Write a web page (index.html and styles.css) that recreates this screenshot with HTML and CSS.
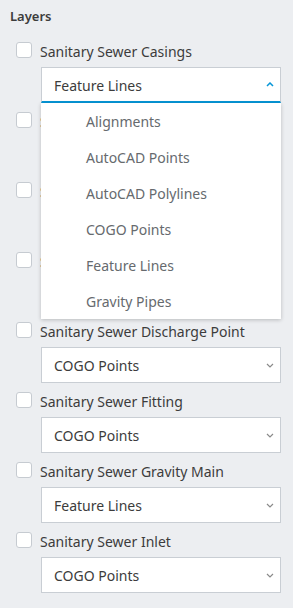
FILE: index.html
```html
<!DOCTYPE html>
<html>
<head>
<meta charset="utf-8">
<link rel="stylesheet" href="styles.css">
</head>
<body>
<div class="panel">
  <h2 class="title">Layers</h2>
  <div class="rows">
    <div class="row">
      <label class="check"><span class="box"></span><span class="label">Sanitary Sewer Casings</span></label>
      <div class="select open">
        <span class="value">Feature Lines</span>
        <svg class="chev" width="8" height="5" viewBox="0 0 8 5"><path d="M1 4 L4 1 L7 4" fill="none" stroke="#0696d7" stroke-width="1.5"/></svg>
        <ul class="menu">
          <li>Alignments</li>
          <li>AutoCAD Points</li>
          <li>AutoCAD Polylines</li>
          <li>COGO Points</li>
          <li>Feature Lines</li>
          <li>Gravity Pipes</li>
        </ul>
      </div>
    </div>
    <div class="row">
      <label class="check"><span class="box"></span><span class="label">Sanitary Sewer Cleanout</span></label>
      <div class="select"><span class="value">COGO Points</span><svg class="chev" width="8" height="5" viewBox="0 0 8 5"><path d="M1 1 L4 4 L7 1" fill="none" stroke="#8a8a8a" stroke-width="1.2"/></svg></div>
    </div>
    <div class="row">
      <label class="check"><span class="box"></span><span class="label">Sanitary Sewer Connection</span></label>
      <div class="select"><span class="value">COGO Points</span><svg class="chev" width="8" height="5" viewBox="0 0 8 5"><path d="M1 1 L4 4 L7 1" fill="none" stroke="#8a8a8a" stroke-width="1.2"/></svg></div>
    </div>
    <div class="row">
      <label class="check"><span class="box"></span><span class="label">Sanitary Sewer Control Valve</span></label>
      <div class="select"><span class="value">COGO Points</span><svg class="chev" width="8" height="5" viewBox="0 0 8 5"><path d="M1 1 L4 4 L7 1" fill="none" stroke="#8a8a8a" stroke-width="1.2"/></svg></div>
    </div>
    <div class="row">
      <label class="check"><span class="box"></span><span class="label">Sanitary Sewer Discharge Point</span></label>
      <div class="select"><span class="value">COGO Points</span><svg class="chev" width="8" height="5" viewBox="0 0 8 5"><path d="M1 1 L4 4 L7 1" fill="none" stroke="#8a8a8a" stroke-width="1.2"/></svg></div>
    </div>
    <div class="row">
      <label class="check"><span class="box"></span><span class="label">Sanitary Sewer Fitting</span></label>
      <div class="select"><span class="value">COGO Points</span><svg class="chev" width="8" height="5" viewBox="0 0 8 5"><path d="M1 1 L4 4 L7 1" fill="none" stroke="#8a8a8a" stroke-width="1.2"/></svg></div>
    </div>
    <div class="row">
      <label class="check"><span class="box"></span><span class="label">Sanitary Sewer Gravity Main</span></label>
      <div class="select"><span class="value">Feature Lines</span><svg class="chev" width="8" height="5" viewBox="0 0 8 5"><path d="M1 1 L4 4 L7 1" fill="none" stroke="#8a8a8a" stroke-width="1.2"/></svg></div>
    </div>
    <div class="row">
      <label class="check"><span class="box"></span><span class="label">Sanitary Sewer Inlet</span></label>
      <div class="select"><span class="value">COGO Points</span><svg class="chev" width="8" height="5" viewBox="0 0 8 5"><path d="M1 1 L4 4 L7 1" fill="none" stroke="#8a8a8a" stroke-width="1.2"/></svg></div>
    </div>
  </div>
</div>
</body>
</html>
```

FILE: styles.css
```css
html, body {
  margin: 0;
  padding: 0;
  background: #eceef1;
}
body {
  width: 293px;
  height: 608px;
  overflow: hidden;
  font-family: "Noto Sans", "Open Sans", sans-serif;
  color: #3c3c3c;
}
.panel {
  padding: 6px 12px 0 10px;
  width: 293px;
  box-sizing: border-box;
}
.title {
  margin: 0;
  font-size: 13px;
  font-weight: 600;
  line-height: 20px;
  height: 32px;
}
.rows {
  display: flex;
  flex-direction: column;
  padding-left: 6px;
}
.row {
  display: flex;
  flex-direction: column;
  height: 70px;
}
.check {
  display: flex;
  align-items: center;
  height: 24px;
  gap: 8px;
}
.box {
  width: 14px;
  height: 14px;
  border: 1px solid #c6cbd1;
  border-radius: 3px;
  background: #fff;
  flex: none;
}
.label {
  font-size: 14px;
  white-space: nowrap;
  padding-top: 2px;
}
.select {
  position: relative;
  margin: 5px 0 0 25px;
  height: 36px;
  box-sizing: border-box;
  border: 1px solid #c9ced4;
  background: #fff;
  display: flex;
  align-items: center;
  justify-content: space-between;
  padding: 0 6px 0 12px;
  font-size: 14px;
}
.value {
  padding-top: 1px;
}
.select.open {
  border-bottom: 2px solid #0696d7;
  z-index: 2;
}
.chev { flex: none; }
.menu {
  position: absolute;
  left: -1px;
  right: -1px;
  top: 35px;
  margin: 0;
  padding: 0;
  list-style: none;
  background: #fff;
  box-shadow: 0 1px 4px rgba(0,0,0,0.22);
}
.menu li {
  height: 36px;
  line-height: 38px;
  padding-left: 45px;
  font-size: 14px;
  color: #666a6e;
}
```
